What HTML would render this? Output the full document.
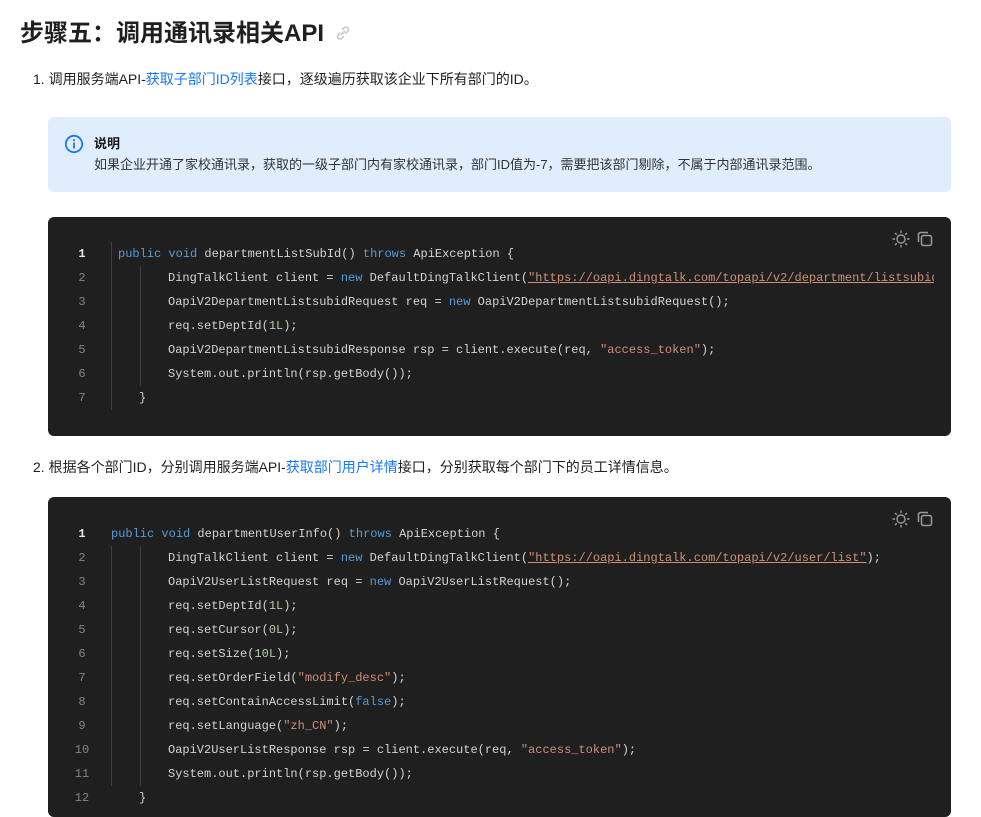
<!DOCTYPE html>
<html><head><meta charset="utf-8"><style>
body{margin:0;background:#fff;font-family:"Liberation Sans","Noto Sans CJK SC",sans-serif;color:#181818;width:981px;height:799px;overflow:hidden;position:relative}
h2{position:absolute;left:20px;top:14px;margin:0;font-size:24px;font-weight:bold;line-height:40px;color:#1f1f1f}
.p{position:absolute;left:33px;font-size:14px;line-height:22px;color:#1f1f1f}
a{color:#1677ff;text-decoration:none}
.note{position:absolute;left:48px;top:117px;width:903px;height:75px;background:#dfedfd;border-radius:6px}
.note .t{position:absolute;left:46px;top:18px;font-size:13px;font-weight:bold;line-height:18px}
.note .d{position:absolute;left:46px;top:38px;font-size:13px;line-height:20px;color:#333}
.code{position:absolute;left:48px;width:903px;background:#1f1f1f;border-radius:6px;overflow:hidden;font-family:"Liberation Mono",monospace;font-size:12px;color:#d4d4d4}
.ln{position:absolute;left:0;width:68px;text-align:center;color:#858585;line-height:24px;font-size:12px}
.ln.b{color:#e6e6e6;font-weight:bold}
.l{position:absolute;white-space:pre;line-height:24px}
.k{color:#569cd6}.s{color:#ce9178}.n{color:#b5cea8}.u{color:#ce9178;text-decoration:underline}
.g{position:absolute;width:1px;background:#404040}
.ic{position:absolute;top:12px}
</style></head><body>
<h2>步骤五：调用通讯录相关API <svg width="20" height="20" viewBox="0 0 20 20" style="vertical-align:-2px;margin-left:2px"><g fill="none" stroke="#c8c8c8" stroke-width="1.6" stroke-linecap="round"><path d="M8.5 11.5l3-3"/><path d="M7 10l-2 2a2.5 2.5 0 0 0 3.5 3.5l2-2"/><path d="M13 10l2-2a2.5 2.5 0 0 0-3.5-3.5l-2 2"/></g></svg></h2>
<div class="p" style="top:68px">1. 调用服务端API-<a>获取子部门ID列表</a>接口，逐级遍历获取该企业下所有部门的ID。</div>
<div class="note">
<svg style="position:absolute;left:16px;top:17px" width="20" height="20" viewBox="0 0 20 20"><circle cx="10" cy="10" r="8.2" fill="none" stroke="#1677ff" stroke-width="1.8"/><rect x="9.1" y="8.5" width="1.8" height="6" fill="#1677ff"/><rect x="9.1" y="5.2" width="1.8" height="1.9" fill="#1677ff"/></svg>
<div class="t">说明</div>
<div class="d">如果企业开通了家校通讯录，获取的一级子部门内有家校通讯录，部门ID值为-7，需要把该部门剔除，不属于内部通讯录范围。</div>
</div>

<div class="code" style="top:217px;height:219px">
<svg class="ic" style="left:843px" width="20" height="20" viewBox="0 0 20 20"><g fill="none" stroke="#9a9a9a" stroke-width="1.4"><circle cx="10" cy="10" r="4"/><path d="M10 1.5v2.5M10 16v2.5M1.5 10h2.5M16 10h2.5M4 4l1.8 1.8M14.2 14.2L16 16M4 16l1.8-1.8M14.2 5.8L16 4"/></g></svg>
<svg class="ic" style="left:867px" width="20" height="20" viewBox="0 0 20 20"><g fill="none" stroke="#9a9a9a" stroke-width="1.5"><rect x="6.5" y="6.5" width="10" height="10" rx="2"/><path d="M13 3.5H5.5a2 2 0 0 0-2 2V13"/></g></svg>
<div class="g" style="left:63px;top:25px;height:168px"></div>
<div class="g" style="left:92px;top:49px;height:120px"></div>
<div class="ln b" style="top:25px">1</div><div class="ln" style="top:49px">2</div><div class="ln" style="top:73px">3</div><div class="ln" style="top:97px">4</div><div class="ln" style="top:121px">5</div><div class="ln" style="top:145px">6</div><div class="ln" style="top:169px">7</div>
<div class="l" style="left:70px;top:25px"><span class="k">public</span> <span class="k">void</span> departmentListSubId() <span class="k">throws</span> ApiException {</div>
<div class="l" style="left:120px;top:49px">DingTalkClient client = <span class="k">new</span> DefaultDingTalkClient(<span class="u">"https://oapi.dingtalk.com/topapi/v2/department/listsubid"</span>);</div>
<div class="l" style="left:120px;top:73px">OapiV2DepartmentListsubidRequest req = <span class="k">new</span> OapiV2DepartmentListsubidRequest();</div>
<div class="l" style="left:120px;top:97px">req.setDeptId(<span class="n">1L</span>);</div>
<div class="l" style="left:120px;top:121px">OapiV2DepartmentListsubidResponse rsp = client.execute(req, <span class="s">"access_token"</span>);</div>
<div class="l" style="left:120px;top:145px">System.out.println(rsp.getBody());</div>
<div class="l" style="left:91px;top:169px">}</div>
<div style="position:absolute;left:886px;top:40px;width:17px;height:40px;background:#1f1f1f"></div>
</div>

<div class="p" style="top:456px">2. 根据各个部门ID，分别调用服务端API-<a>获取部门用户详情</a>接口，分别获取每个部门下的员工详情信息。</div>

<div class="code" style="top:497px;height:320px">
<svg class="ic" style="left:843px" width="20" height="20" viewBox="0 0 20 20"><g fill="none" stroke="#9a9a9a" stroke-width="1.4"><circle cx="10" cy="10" r="4"/><path d="M10 1.5v2.5M10 16v2.5M1.5 10h2.5M16 10h2.5M4 4l1.8 1.8M14.2 14.2L16 16M4 16l1.8-1.8M14.2 5.8L16 4"/></g></svg>
<svg class="ic" style="left:867px" width="20" height="20" viewBox="0 0 20 20"><g fill="none" stroke="#9a9a9a" stroke-width="1.5"><rect x="6.5" y="6.5" width="10" height="10" rx="2"/><path d="M13 3.5H5.5a2 2 0 0 0-2 2V13"/></g></svg>
<div class="g" style="left:63px;top:49px;height:240px"></div>
<div class="g" style="left:92px;top:49px;height:240px"></div>
<div class="ln b" style="top:25px">1</div><div class="ln" style="top:49px">2</div><div class="ln" style="top:73px">3</div><div class="ln" style="top:97px">4</div><div class="ln" style="top:121px">5</div><div class="ln" style="top:145px">6</div><div class="ln" style="top:169px">7</div><div class="ln" style="top:193px">8</div><div class="ln" style="top:217px">9</div><div class="ln" style="top:241px">10</div><div class="ln" style="top:265px">11</div><div class="ln" style="top:289px">12</div>
<div class="l" style="left:63px;top:25px"><span class="k">public</span> <span class="k">void</span> departmentUserInfo() <span class="k">throws</span> ApiException {</div>
<div class="l" style="left:120px;top:49px">DingTalkClient client = <span class="k">new</span> DefaultDingTalkClient(<span class="u">"https://oapi.dingtalk.com/topapi/v2/user/list"</span>);</div>
<div class="l" style="left:120px;top:73px">OapiV2UserListRequest req = <span class="k">new</span> OapiV2UserListRequest();</div>
<div class="l" style="left:120px;top:97px">req.setDeptId(<span class="n">1L</span>);</div>
<div class="l" style="left:120px;top:121px">req.setCursor(<span class="n">0L</span>);</div>
<div class="l" style="left:120px;top:145px">req.setSize(<span class="n">10L</span>);</div>
<div class="l" style="left:120px;top:169px">req.setOrderField(<span class="s">"modify_desc"</span>);</div>
<div class="l" style="left:120px;top:193px">req.setContainAccessLimit(<span class="k">false</span>);</div>
<div class="l" style="left:120px;top:217px">req.setLanguage(<span class="s">"zh_CN"</span>);</div>
<div class="l" style="left:120px;top:241px">OapiV2UserListResponse rsp = client.execute(req, <span class="s">"access_token"</span>);</div>
<div class="l" style="left:120px;top:265px">System.out.println(rsp.getBody());</div>
<div class="l" style="left:91px;top:289px">}</div>
</div>
</body></html>
